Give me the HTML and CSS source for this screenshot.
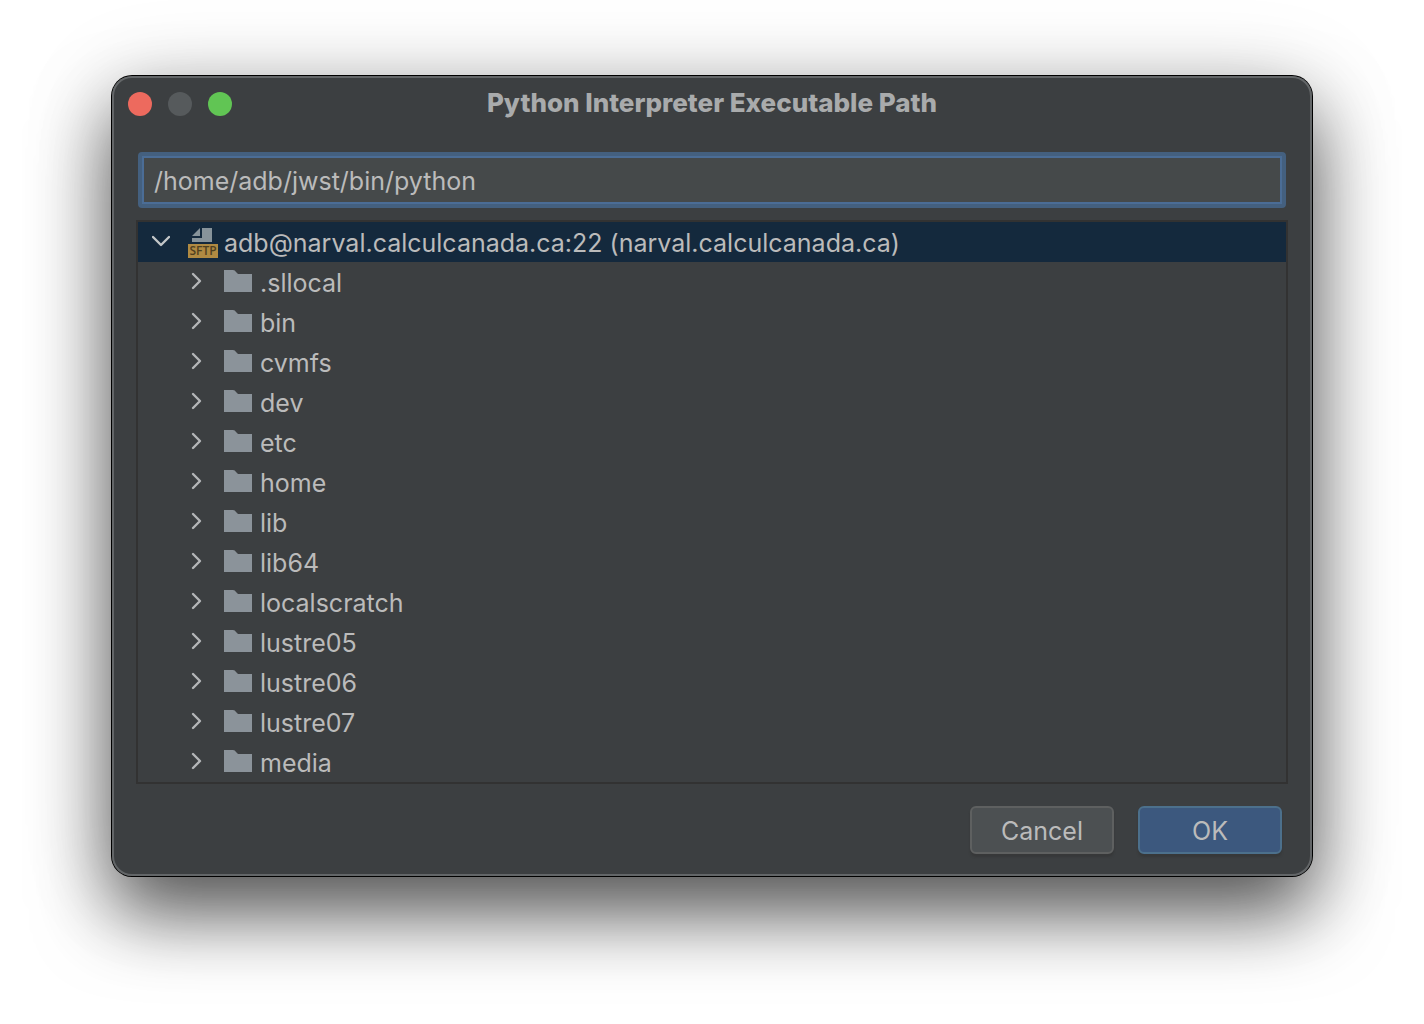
FILE: index.html
```html
<!DOCTYPE html>
<html lang="en">
<head>
<meta charset="utf-8">
<title>Python Interpreter Executable Path</title>
<link rel="stylesheet" href="styles.css">
</head>
<body>
<svg class="defs" aria-hidden="true">
  <symbol id="folder" viewBox="0 0 28 22"><path d="M0 0H9Q11 0 12 2L14 4H28V22H0Z" fill="#8b939a"/></symbol>
  <symbol id="right" viewBox="0 0 12 18"><path d="M3 2L10 9L3 16" fill="none" stroke="#b4b6b8" stroke-width="2.4" stroke-linecap="round" stroke-linejoin="round"/></symbol>
</svg>
<main class="dialog">
  <header class="titlebar">
    <div class="lights">
      <button class="light close" aria-label="Close"></button>
      <button class="light minimize" aria-label="Minimize" disabled></button>
      <button class="light zoom" aria-label="Zoom"></button>
    </div>
    <h1 class="title">Python Interpreter Executable Path</h1>
  </header>
  <form class="content">
    <input class="path" type="text" aria-label="Interpreter path" value="/home/adb/jwst/bin/python">
    <ul class="tree" role="tree">
      <li role="treeitem" aria-expanded="true">
        <div class="row root">
          <svg class="chevron-down" viewBox="0 0 18 12"><path d="M1 2L9 10L17 2" fill="none" stroke="#c3c6c8" stroke-width="2.4" stroke-linecap="round" stroke-linejoin="round"/></svg>
          <svg class="sftp" viewBox="0 0 30 30">
            <path d="M4 8L12 0V8Z" fill="#87939a"/>
            <path d="M14 0H24V14H4V10H14Z" fill="#87939a"/>
            <path d="M0 16H30V30H0Z" fill="#b08a42"/>
            <text class="badge-text" x="15" y="27" text-anchor="middle">SFTP</text>
          </svg>
          <span>adb@narval.calculcanada.ca:22 (narval.calculcanada.ca)</span>
        </div>
        <ul class="children" role="group">
          <li class="row" role="treeitem"><svg class="chevron"><use href="#right"/></svg><svg class="folder"><use href="#folder"/></svg><span>.sllocal</span></li>
          <li class="row" role="treeitem"><svg class="chevron"><use href="#right"/></svg><svg class="folder"><use href="#folder"/></svg><span>bin</span></li>
          <li class="row" role="treeitem"><svg class="chevron"><use href="#right"/></svg><svg class="folder"><use href="#folder"/></svg><span>cvmfs</span></li>
          <li class="row" role="treeitem"><svg class="chevron"><use href="#right"/></svg><svg class="folder"><use href="#folder"/></svg><span>dev</span></li>
          <li class="row" role="treeitem"><svg class="chevron"><use href="#right"/></svg><svg class="folder"><use href="#folder"/></svg><span>etc</span></li>
          <li class="row" role="treeitem"><svg class="chevron"><use href="#right"/></svg><svg class="folder"><use href="#folder"/></svg><span>home</span></li>
          <li class="row" role="treeitem"><svg class="chevron"><use href="#right"/></svg><svg class="folder"><use href="#folder"/></svg><span>lib</span></li>
          <li class="row" role="treeitem"><svg class="chevron"><use href="#right"/></svg><svg class="folder"><use href="#folder"/></svg><span>lib64</span></li>
          <li class="row" role="treeitem"><svg class="chevron"><use href="#right"/></svg><svg class="folder"><use href="#folder"/></svg><span>localscratch</span></li>
          <li class="row" role="treeitem"><svg class="chevron"><use href="#right"/></svg><svg class="folder"><use href="#folder"/></svg><span>lustre05</span></li>
          <li class="row" role="treeitem"><svg class="chevron"><use href="#right"/></svg><svg class="folder"><use href="#folder"/></svg><span>lustre06</span></li>
          <li class="row" role="treeitem"><svg class="chevron"><use href="#right"/></svg><svg class="folder"><use href="#folder"/></svg><span>lustre07</span></li>
          <li class="row" role="treeitem"><svg class="chevron"><use href="#right"/></svg><svg class="folder"><use href="#folder"/></svg><span>media</span></li>
        </ul>
      </li>
    </ul>
    <div class="actions">
      <button class="button" type="button">Cancel</button>
      <button class="button primary" type="submit">OK</button>
    </div>
  </form>
</main>
</body>
</html>
```
FILE: styles.css
```css
* { box-sizing: border-box; }

body {
  min-height: 100vh;
  margin: 0;
  padding: 76px 112px;
  background: #fff;
  color: #bbb;
  font: 25px/38px Inter, "Liberation Sans", sans-serif;
}

.defs { display: none; }

.dialog {
  border-radius: 20px;
  background: #3c3f41;
  box-shadow:
    inset 0 0 0 2px #636668,
    0 0 0 1px #000,
    0 38px 76px rgba(0, 0, 0, 0.62),
    0 10px 90px rgba(0, 0, 0, 0.18);
}

.titlebar {
  display: grid;
  grid-template-columns: 1fr auto 1fr;
  align-items: center;
  height: 56px;
  padding: 0 16px;
}

.lights { display: flex; gap: 16px; }

.light {
  width: 24px;
  height: 24px;
  padding: 0;
  border: 0;
  border-radius: 50%;
}
.close { background: #ed6a5e; }
.minimize { background: #565a5c; }
.zoom { background: #61c554; }

.title {
  margin: 0;
  padding-bottom: 2px;
  color: #a9abac;
  font-size: 26px;
  font-weight: 800;
}

.content {
  display: flex;
  flex-direction: column;
  padding: 20px 24px 22px;
}

.path {
  height: 56px;
  margin: 0 2px 12px;
  padding: 2px 12px 0;
  border: 4px solid #44607f;
  border-radius: 4px;
  outline: 0;
  background: #45494a;
  box-shadow: inset 0 0 0 2px #4b6d96;
  color: #bbb;
  font: inherit;
}

.tree {
  margin: 0 0 22px;
  padding: 0;
  border: 2px solid #323232;
  list-style: none;
}

.children {
  margin: 0;
  padding: 0;
  list-style: none;
}

.row {
  display: flex;
  align-items: center;
  height: 40px;
  padding: 2px 0 0 52px;
}

.root {
  padding-left: 14px;
  background: #14293d;
}

.chevron-down,
.chevron,
.folder { margin-bottom: 4px; }

.chevron-down { width: 18px; height: 12px; margin-right: 18px; }
.chevron { width: 12px; height: 18px; margin-right: 22px; }
.sftp { width: 30px; height: 30px; margin-right: 6px; overflow: visible; }
.folder { width: 28px; height: 22px; margin-right: 8px; }

.badge-text {
  fill: #4f4020;
  font: 600 12px/14px "Open Sans", sans-serif;
}

.actions {
  display: flex;
  justify-content: flex-end;
  gap: 24px;
  padding-right: 6px;
}

.button {
  width: 144px;
  height: 48px;
  padding: 2px 0 0;
  border: 2px solid #5e6060;
  border-radius: 6px;
  background: #4c5052;
  box-shadow: 0 3px 2px rgba(50, 50, 50, 0.5);
  color: #bbb;
  font: inherit;
}

.primary {
  border-color: #4c708c;
  background: #3c587e;
}
```
